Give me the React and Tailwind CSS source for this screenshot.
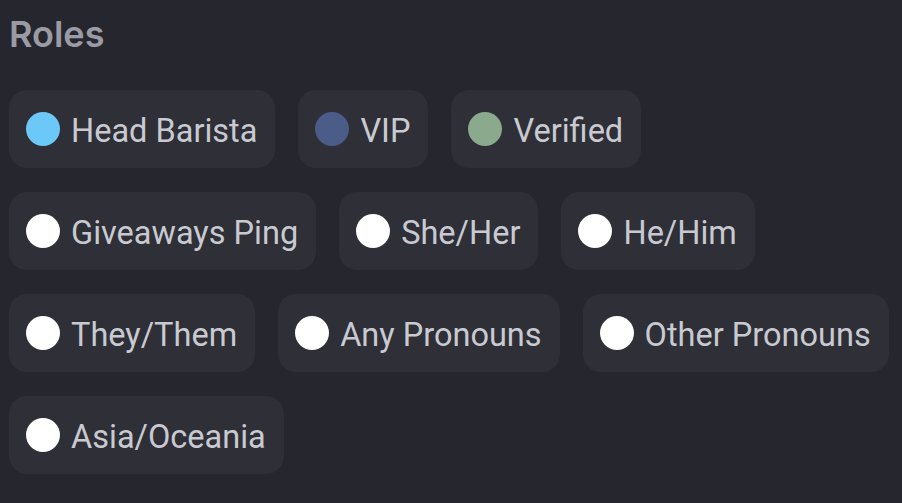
const roles = [
  { name: 'Head Barista', color: 'bg-[#6cc9f7]' },
  { name: 'VIP', color: 'bg-[#4b5c88]' },
  { name: 'Verified', color: 'bg-[#8aa98d]' },
  { name: 'Giveaways Ping', color: 'bg-white' },
  { name: 'She/Her', color: 'bg-white' },
  { name: 'He/Him', color: 'bg-white' },
  { name: 'They/Them', color: 'bg-white' },
  { name: 'Any Pronouns', color: 'bg-white' },
  { name: 'Other Pronouns', color: 'bg-white' },
  { name: 'Asia/Oceania', color: 'bg-white' },
]

const RoleChip = ({ name, color }) => (
  <div className="flex items-center h-[78px] pl-[17px] pr-[18px] rounded-[18px] bg-[#2e2f37]">
    <span className={`w-[34px] h-[34px] rounded-full shrink-0 ${color}`} />
    <span className="ml-[11px] pt-[4px] text-[32.5px] leading-none text-[#c9cad1] font-['Roboto',sans-serif]">{name}</span>
  </div>
)

export default function App() {
  return (
    <div className="w-[902px] h-[503px] bg-[#26262e] overflow-hidden font-['Inter','Noto_Sans',sans-serif] pl-[9px]">
      <h2 className="pt-[12px] text-[36px] leading-[44px] font-semibold text-[#9a9ba4]">Roles</h2>
      <div className="mt-[34px] flex flex-wrap gap-x-[23px] gap-y-[24px]">
        {roles.map(r => (
          <RoleChip key={r.name} {...r} />
        ))}
      </div>
    </div>
  )
}
